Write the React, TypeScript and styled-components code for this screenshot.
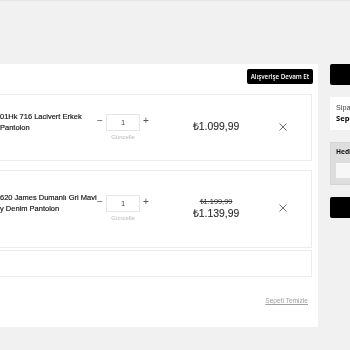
import { FunctionComponent } from "react";
import styled, { createGlobalStyle } from "styled-components";

const GlobalStyle = createGlobalStyle`
  html, body {
    margin: 0;
    padding: 0;
    background: #f1f1f1;
    overflow: hidden;
    font-family: "Liberation Sans", Arial, sans-serif;
  }
  * {
    box-sizing: border-box;
  }
`;

interface CartItem {
  id: number;
  lines: string[];
  price: string;
  oldPrice?: string;
  height: number;
  padTop: number;
}

const items: CartItem[] = [
  {
    id: 1,
    lines: ["01Hk 716 Lacivert Erkek", "Pantolon"],
    price: "₺1.099,99",
    height: 67,
    padTop: 16,
  },
  {
    id: 2,
    lines: ["620 James Dumanlı Gri Mavi", "y Denim Pantolon"],
    price: "₺1.139,99",
    oldPrice: "₺1.199,99",
    height: 78,
    padTop: 21,
  },
];

const CloseIcon = () => (
  <svg width="8" height="8" viewBox="0 0 8 8">
    <path d="M0.5 0.5 L7.5 7.5 M7.5 0.5 L0.5 7.5" stroke="#6f6f6f" strokeWidth="1" />
  </svg>
);

const App: FunctionComponent = () => {
  return (
    <>
      <GlobalStyle />
      <Page>
        <MainPanel>
          <Header>
            <ContinueButton>Alışverişe Devam Et</ContinueButton>
          </Header>
          {items.map((item, index) => (
            <ItemCard
              key={item.id}
              $height={item.height}
              $padTop={item.padTop}
              $gap={index === 0 ? 9 : 2}
            >
              <ProductName>
                {item.lines.map((line) => (
                  <div key={line}>{line}</div>
                ))}
              </ProductName>
              <QtyColumn>
                <QtyRow>
                  <QtySign>−</QtySign>
                  <QtyBox>1</QtyBox>
                  <QtySign>+</QtySign>
                </QtyRow>
                <UpdateLabel>Güncelle</UpdateLabel>
              </QtyColumn>
              <div />
              <PriceBlock $hasOld={!!item.oldPrice}>
                {item.oldPrice && <OldPrice>{item.oldPrice}</OldPrice>}
                <Price>{item.price}</Price>
              </PriceBlock>
              <CloseButton>
                <CloseIcon />
              </CloseButton>
            </ItemCard>
          ))}
          <EmptyCard />
          <Footer>
            <ClearLink>Sepeti Temizle</ClearLink>
          </Footer>
        </MainPanel>
        <Sidebar>
          <BlackBar $height={21} />
          <SummaryBox>
            <SummaryLabel>Sipariş Özeti</SummaryLabel>
            <SummaryTitle>Sepet Toplamı</SummaryTitle>
          </SummaryBox>
          <GiftBox>
            <GiftTitle>Hediye Çeki</GiftTitle>
            <GiftInput />
          </GiftBox>
          <BlackBar $height={21} />
        </Sidebar>
      </Page>
    </>
  );
};

interface CardProps {
  $height: number;
  $padTop: number;
  $gap: number;
}

// will-change keeps text on a transparent layer, so it renders with grayscale antialiasing
const Page = styled.div`
  display: flex;
  flex-direction: row;
  gap: 12px;
  width: 470px;
  padding-top: 63px;
  border-top: 1px solid #e7e7e7;
  will-change: transform;
`;

const MainPanel = styled.div`
  display: flex;
  flex-direction: column;
  width: 318px;
  height: 263px;
  background: #fff;
  padding: 5px 6px 0 0;
  flex-shrink: 0;
`;

const Header = styled.div`
  display: flex;
  justify-content: flex-end;
  height: 15px;
  margin: 0 -1px 10px 0;
`;

const ContinueButton = styled.div`
  display: flex;
  align-items: center;
  justify-content: center;
  width: 66px;
  height: 15px;
  background: #000;
  color: #fff;
  border-radius: 2px;
  font-family: "Open Sans", "Liberation Sans", sans-serif;
  font-weight: 600;
  font-size: 6.3px;
  letter-spacing: -0.05px;
  white-space: nowrap;
`;

const ItemCard = styled.div<CardProps>`
  display: grid;
  grid-template-columns: 93px 64px 20px 80px 55px;
  align-items: start;
  height: ${(p) => p.$height}px;
  padding-top: ${(p) => p.$padTop}px;
  margin: 0 0 ${(p) => p.$gap}px -2px;
  border: 1px solid #ececec;
  background: #fff;
`;

const EmptyCard = styled.div`
  height: 27px;
  margin-left: -2px;
  border: 1px solid #ececec;
  background: #fff;
`;

const ProductName = styled.div`
  font-size: 7.5px;
  line-height: 11px;
  color: #111;
  -webkit-text-stroke: 0.15px #111;
  white-space: nowrap;
  padding-left: 1px;
`;

const QtyColumn = styled.div`
  display: flex;
  flex-direction: column;
  align-items: flex-start;
  margin-top: 3px;
`;

const QtyRow = styled.div`
  display: flex;
  align-items: center;
  gap: 2px;
  padding-left: 4px;
`;

const QtySign = styled.span`
  width: 8px;
  text-align: center;
  font-size: 10px;
  line-height: 10px;
  color: #555;
  margin-top: -3px;
`;

const QtyBox = styled.div`
  display: flex;
  align-items: center;
  justify-content: center;
  width: 34px;
  height: 17px;
  border: 1px solid #e6e6e6;
  font-size: 7.5px;
  color: #444;
`;

const UpdateLabel = styled.div`
  width: 34px;
  margin: 2px 0 0 14px;
  text-align: center;
  font-size: 6px;
  line-height: 8px;
  color: #b8b8b8;
  white-space: nowrap;
`;

const PriceBlock = styled.div<{ $hasOld?: boolean }>`
  display: flex;
  flex-direction: column;
  align-items: center;
  margin-top: ${(p) => (p.$hasOld ? 4.5 : 10)}px;
`;

const OldPrice = styled.div`
  font-size: 7.4px;
  line-height: 9px;
  color: #333;
  text-decoration: line-through;
  margin-bottom: 2.5px;
`;

const Price = styled.div`
  font-size: 10.4px;
  line-height: 12px;
  color: #2a2a2a;
  -webkit-text-stroke: 0.1px #2a2a2a;
  white-space: nowrap;
`;

const CloseButton = styled.div`
  display: flex;
  justify-content: center;
  margin-top: 12px;
  padding-right: 1px;
`;

const Footer = styled.div`
  display: flex;
  justify-content: flex-end;
  padding-right: 4px;
  margin-top: 19px;
`;

const ClearLink = styled.span`
  font-size: 6.6px;
  line-height: 9px;
  color: #a0a0a0;
  text-decoration: underline;
`;

const Sidebar = styled.div`
  display: flex;
  flex-direction: column;
  gap: 12px;
  width: 130px;
  flex-shrink: 0;
`;

const BlackBar = styled.div<{ $height: number }>`
  height: ${(p) => p.$height}px;
  background: #000;
  border-radius: 2px 0 0 2px;
`;

const SummaryBox = styled.div`
  height: 33px;
  padding: 6px 6px 0;
  background: #fff;
`;

const SummaryLabel = styled.div`
  font-size: 7.2px;
  line-height: 9px;
  color: #444;
  white-space: nowrap;
`;

const SummaryTitle = styled.div`
  font-family: "Open Sans", "Liberation Sans", sans-serif;
  font-weight: 700;
  font-size: 7.6px;
  line-height: 9px;
  margin-top: 2px;
  color: #000;
  white-space: nowrap;
`;

const GiftBox = styled.div`
  height: 43px;
  padding: 5px 0 0 5px;
  background: #dedede;
  border: 1px solid #d6d6d6;
`;

const GiftTitle = styled.div`
  font-family: "Open Sans", "Liberation Sans", sans-serif;
  font-weight: 700;
  font-size: 6.6px;
  line-height: 8px;
  color: #111;
  white-space: nowrap;
`;

const GiftInput = styled.div`
  height: 15px;
  margin-top: 7px;
  background: #f7f7f7;
`;

export default App;
